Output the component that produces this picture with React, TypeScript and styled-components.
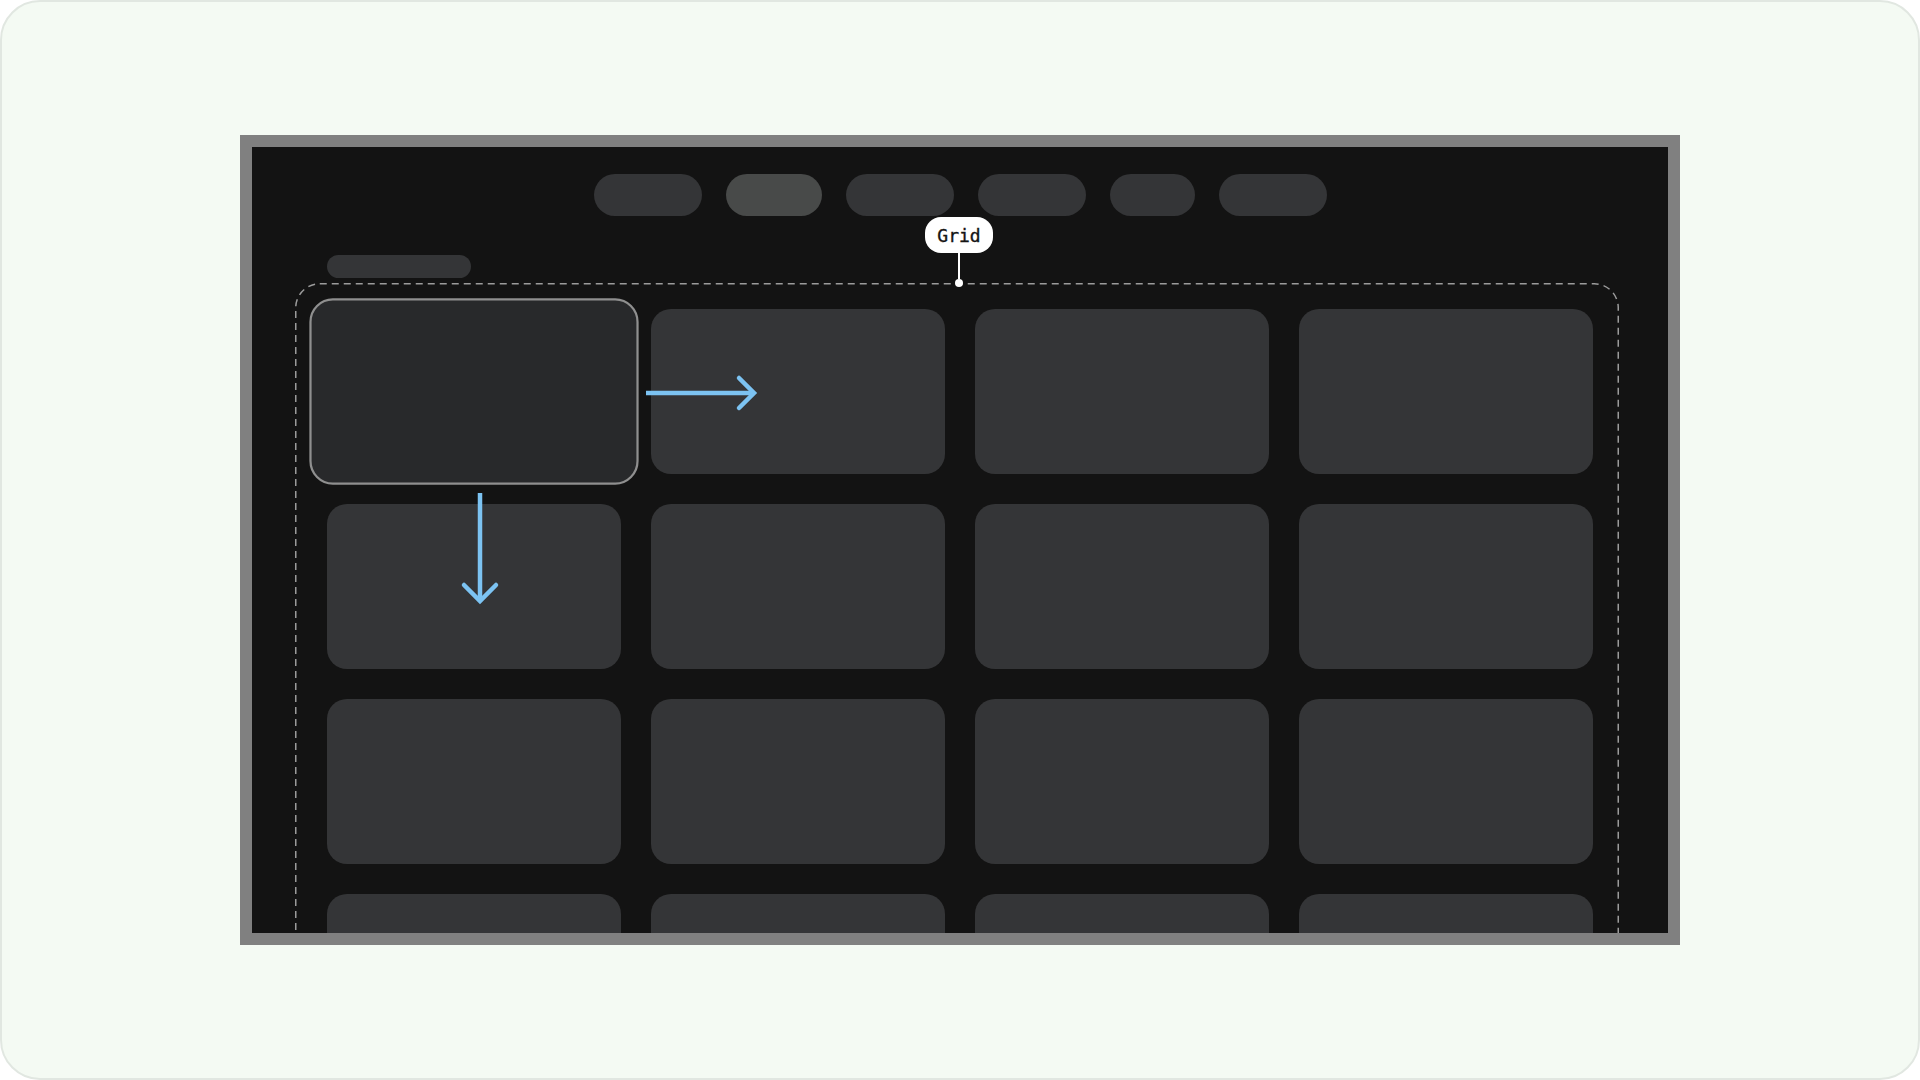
import React from "react";
import styled, { createGlobalStyle, css } from "styled-components";

const GlobalStyle = createGlobalStyle`
  html, body {
    margin: 0;
    padding: 0;
    background: #ffffff;
  }
  body {
    font-family: "Inter", "Noto Sans", sans-serif;
  }
  *, *::before, *::after {
    box-sizing: border-box;
  }
`;

const Canvas = styled.div`
  width: 1920px;
  height: 1080px;
  border: 2px solid #e1e7e1;
  border-radius: 40px;
  background: #f4faf3;
  display: flex;
  align-items: center;
  justify-content: center;
`;

const TvFrame = styled.div`
  width: 1440px;
  height: 810px;
  border: 12px solid #808080;
  background: #131313;
  overflow: hidden;
  display: flex;
  flex-direction: column;
`;

const NavBar = styled.nav`
  display: flex;
  justify-content: center;
  gap: 24px;
  padding-top: 27px;
`;

const NavPill = styled.div<{ $w: number; $active?: boolean }>`
  width: ${(p) => p.$w}px;
  height: 42px;
  border-radius: 21px;
  background: ${(p) => (p.$active ? "#484a49" : "#343537")};
`;

const Section = styled.section`
  display: flex;
  flex-direction: column;
  padding: 39px 0 0 43px;
`;

const SectionTitle = styled.div`
  margin-left: 32px;
  width: 144px;
  height: 23px;
  border-radius: 12px;
  background: #343537;
`;

const GridArea = styled.div`
  position: relative;
  margin-top: 5px;
  width: 1324px;
  padding: 26px 0 30px 32px;
`;

const Outline = styled.svg`
  position: absolute;
  left: 0;
  top: 0;
  overflow: visible;
  pointer-events: none;
`;

const CardGrid = styled.div`
  display: grid;
  grid-template-columns: repeat(4, 294px);
  grid-auto-rows: 165px;
  gap: 30px;
`;

const Tile = styled.div<{ $focused?: boolean }>`
  border-radius: 20px;
  background: #343537;
  ${(p) =>
    p.$focused &&
    css`
      position: relative;
      z-index: 1;
      background: #28292b;
      border: 2.7px solid #8f8f8f;
      border-radius: 21px;
      transform: scale(1.12, 1.13);
    `}
`;

const Callout = styled.div`
  position: absolute;
  left: 664px;
  top: -66px;
  transform: translateX(-50%);
  display: flex;
  flex-direction: column;
  align-items: center;
  z-index: 3;
`;

const Bubble = styled.div`
  width: 68px;
  height: 36px;
  border-radius: 16px;
  background: #ffffff;
  color: #141414;
  display: flex;
  align-items: center;
  justify-content: center;
  font-family: "DejaVu Sans Mono", "Liberation Mono", monospace;
  font-weight: 400;
  font-size: 18px;
  -webkit-text-stroke: 0.35px #141414;
`;

const Stem = styled.div`
  width: 2px;
  height: 26px;
  background: #ffffff;
`;

const Dot = styled.div`
  width: 8px;
  height: 8px;
  border-radius: 50%;
  background: #ffffff;
`;

const Arrows = styled.svg`
  position: absolute;
  left: 0;
  top: 0;
  z-index: 2;
  overflow: visible;
  pointer-events: none;
`;

const navItems = [
  { w: 108 },
  { w: 96, active: true },
  { w: 108 },
  { w: 108 },
  { w: 85 },
  { w: 108 },
];

const ARROW = "#7cc3f2";

export default function App() {
  const tiles = Array.from({ length: 16 }, (_, i) => i);
  return (
    <>
      <GlobalStyle />
      <Canvas>
        <TvFrame>
          <NavBar>
            {navItems.map((n, i) => (
              <NavPill key={i} $w={n.w} $active={n.active} />
            ))}
          </NavBar>
          <Section>
            <SectionTitle />
            <GridArea>
              <Outline width={1324} height={806} viewBox="0 0 1324 806">
                <rect
                  x={0.75}
                  y={0.75}
                  width={1322.5}
                  height={804.5}
                  rx={24}
                  fill="none"
                  stroke="#9b9b9b"
                  strokeWidth={1.5}
                  strokeDasharray="7 5"
                />
              </Outline>
              <Callout>
                <Bubble>Grid</Bubble>
                <Stem />
                <Dot />
              </Callout>
              <CardGrid>
                {tiles.map((i) => (
                  <Tile key={i} $focused={i === 0} />
                ))}
              </CardGrid>
              <Arrows width={500} height={340} viewBox="0 0 500 340">
                <path d="M351 110 H458" stroke={ARROW} strokeWidth={4.5} fill="none" />
                <path
                  d="M444 95 L459 110 L444 125"
                  stroke={ARROW}
                  strokeWidth={4.5}
                  fill="none"
                  strokeLinecap="round"
                  strokeLinejoin="miter"
                />
                <path d="M185 210 V317" stroke={ARROW} strokeWidth={4.5} fill="none" />
                <path
                  d="M169 302 L185 318 L201 302"
                  stroke={ARROW}
                  strokeWidth={4.5}
                  fill="none"
                  strokeLinecap="round"
                  strokeLinejoin="miter"
                />
              </Arrows>
            </GridArea>
          </Section>
        </TvFrame>
      </Canvas>
    </>
  );
}
